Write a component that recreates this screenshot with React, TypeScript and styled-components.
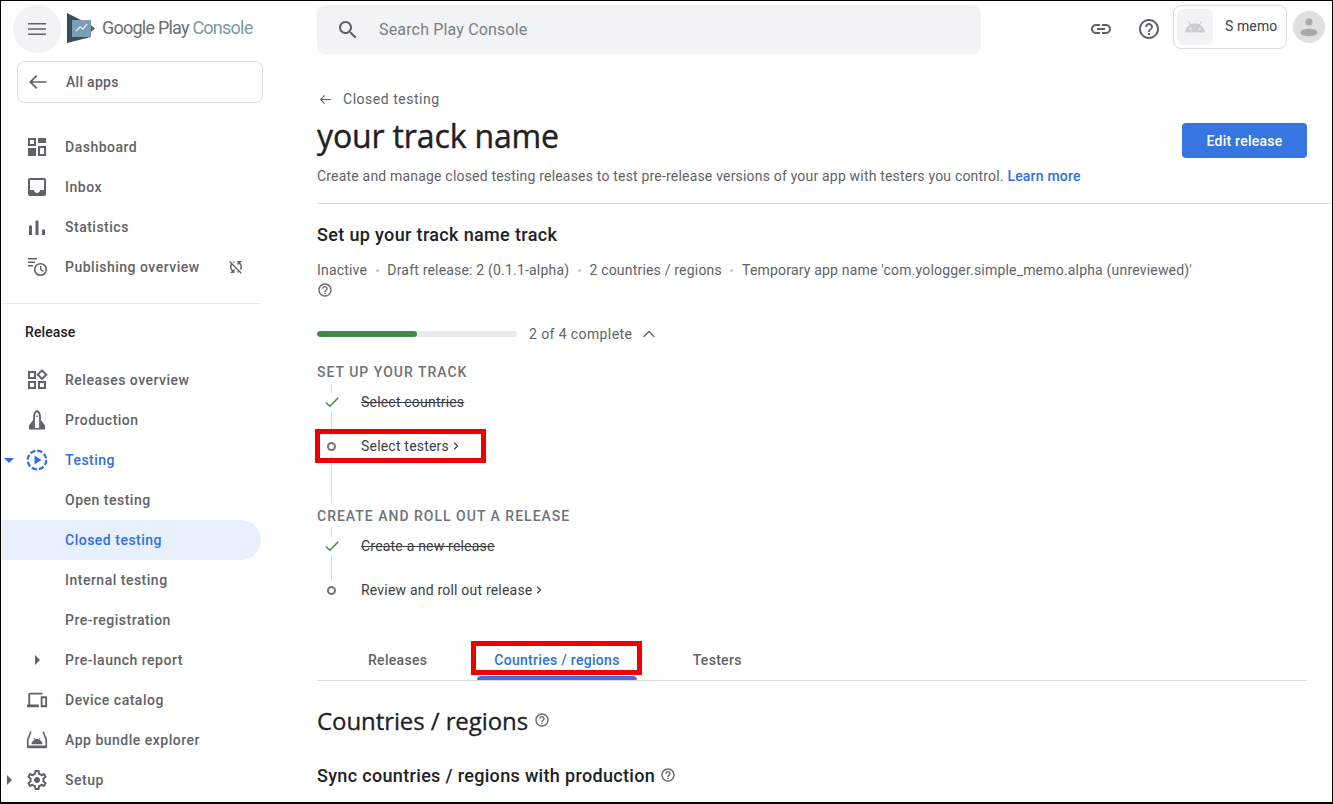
import React from 'react';
import styled, { createGlobalStyle } from 'styled-components';
import { ChevronRight, ChevronUp } from 'lucide-react';

const GlobalStyle = createGlobalStyle`
  html, body {
    margin: 0;
    padding: 0;
    background: #fff;
  }
  * {
    box-sizing: border-box;
  }
  body {
    font-family: Roboto, "Liberation Sans", sans-serif;
    color: #202124;
  }
`;

const Help = ({ size = 16, color = '#5f6368' }: { size?: number; color?: string }) => (
  <svg width={size} height={size} viewBox="0 0 24 24" fill={color}>
    <path d="M11 18h2v-2h-2v2zm1-16C6.480 2 2 6.480 2 12s4.480 10 10 10 10-4.480 10-10S17.520 2 12 2zm0 18c-4.410 0-8-3.590-8-8s3.590-8 8-8 8 3.590 8 8-3.590 8-8 8zm0-14c-2.210 0-4 1.790-4 4h2c0-1.100.9-2 2-2s2 .9 2 2c0 2-3 1.750-3 5h2c0-2.250 3-2.500 3-5 0-2.210-1.790-4-4-4z" />
  </svg>
);

const Md = ({ d, size = 24, color = '#5f6368' }: { d: string; size?: number; color?: string }) => (
  <svg width={size} height={size} viewBox="0 0 24 24" fill={color}>
    <path d={d} />
  </svg>
);

const paths = {
  menu: 'M3 18h18v-1.600H3V18zm0-5.200h18v-1.600H3v1.600zM3 6v1.600h18V6H3z',
  back: 'M20 11.200H6.800l4.600-4.600L10.300 5.500 3.800 12l6.500 6.500 1.100-1.100-4.600-4.600H20v-1.600z',
  search:
    'M15.500 14h-.79l-.28-.27C15.410 12.590 16 11.110 16 9.500 16 5.910 13.090 3 9.500 3S3 5.910 3 9.500 5.910 16 9.500 16c1.610 0 3.090-.59 4.230-1.570l.27.28v.79l5 4.990L20.490 19l-4.990-5zm-6 0C7.010 14 5 11.990 5 9.500S7.010 5 9.500 5 14 7.010 14 9.500 11.990 14 9.500 14z',
  link: 'M3.900 12c0-1.710 1.390-3.100 3.100-3.100h4V7H7c-2.760 0-5 2.240-5 5s2.240 5 5 5h4v-1.900H7c-1.710 0-3.100-1.390-3.100-3.100zM8 13h8v-2H8v2zm9-6h-4v1.900h4c1.710 0 3.100 1.390 3.100 3.100s-1.390 3.100-3.100 3.100h-4V17h4c2.760 0 5-2.240 5-5s-2.240-5-5-5z',
  check: 'M9 16.200L4.800 12l-1.400 1.400L9 19 21 7l-1.400-1.400z',
  syncOff:
    'M10 6.350V4.260c-.8.21-1.550.54-2.230.96l1.460 1.460c.25-.12.5-.24.770-.33zm-7.140-.94l2.360 2.360C4.450 8.990 4 10.440 4 12c0 2.210.91 4.200 2.360 5.640L4 20h6v-6l-2.240 2.240C6.680 15.150 6 13.660 6 12c0-1 .25-1.940.68-2.770l8.080 8.080c-.25.13-.5.25-.77.34v2.090c.8-.21 1.550-.54 2.230-.96l2.360 2.360 1.270-1.270L4.140 4.140 2.860 5.410zM20 4h-6v6l2.240-2.240C17.320 8.850 18 10.340 18 12c0 1-.25 1.940-.68 2.770l1.460 1.460C19.550 15.010 20 13.560 20 12c0-2.210-.91-4.200-2.360-5.640L20 4z',
  dashboard:
    'M3 3h8v8H3V3zm2 2v4h4V5H5zm8-2h8v5h-8V3zm0 8h8v10h-8V11zm2 2v6h4v-6h-4zM3 13h8v8H3v-8z',
  inbox:
    'M19 3H5c-1.100 0-2 .9-2 2v14c0 1.100.9 2 2 2h14c1.100 0 2-.9 2-2V5c0-1.100-.9-2-2-2zm0 12h-4c0 1.660-1.350 3-3 3s-3-1.340-3-3H5V5h14v10z',
  stats: 'M4 10.500h3V20H4v-9.500zm6.500-5h3V20h-3V5.500zm6.500 9h3V20h-3v-5.500z',
  releases:
    'M3 3h8v8H3V3zm2 2v4h4V5H5zM3 13h8v8H3v-8zm2 2v4h4v-4H5zm8-2h8v8h-8v-8zm2 2v4h4v-4h-4zm2-14l5.660 5.660L17 12.300l-5.660-5.640L17 1zm0 2.830L14.170 6.660 17 9.490l2.830-2.830L17 3.830z',
  device:
    'M4.500 6H18V4H4.500C3.400 4 2.500 4.900 2.500 6v11H1v3h13v-3H4.500V6zM22 8h-5c-.55 0-1 .45-1 1v10c0 .55.45 1 1 1h5c.55 0 1-.45 1-1V9c0-.55-.45-1-1-1zm-1 9.500h-3V10h3v7.500z',
  bundle:
    'M4.600 2.500L1 11.500V19.500C1 20.300 1.700 21 2.500 21h19c.8 0 1.500-.7 1.500-1.500v-8l-3.600-9-1.500.6L21.200 12v6H2.800v-6l3.300-8.900-1.500-.6zM6 16.500c.2-2.300 1.400-4 3.300-4.900L8.300 10l.6-.4 1.100 1.600c1.300-.4 2.700-.4 4 0l1.100-1.600.6.4-1 1.600c1.900.9 3.100 2.600 3.300 4.900H6z',
  settings:
    'M19.430 12.980c.04-.32.07-.64.07-.98s-.03-.66-.07-.98l2.110-1.650c.19-.15.24-.42.12-.64l-2-3.460c-.12-.22-.39-.3-.61-.22l-2.490 1c-.52-.4-1.080-.73-1.690-.98l-.38-2.650C14.460 2.180 14.250 2 14 2h-4c-.25 0-.46.18-.49.42l-.38 2.650c-.61.25-1.170.59-1.690.98l-2.490-1c-.23-.09-.49 0-.61.22l-2 3.460c-.13.22-.07.49.12.64l2.110 1.650c-.04.32-.07.65-.07.98s.03.66.07.98l-2.110 1.650c-.19.15-.24.42-.12.64l2 3.460c.12.22.39.3.61.22l2.490-1c.52.4 1.080.73 1.690.98l.38 2.650c.03.24.24.42.49.42h4c.25 0 .46-.18.49-.42l.38-2.650c.61-.25 1.170-.59 1.690-.98l2.490 1c.23.09.49 0 .61-.22l2-3.460c.12-.22.07-.49-.12-.64l-2.110-1.650zM17.450 11.270c.04.31.05.52.05.73 0 .21-.02.43-.05.73l-.14 1.130.89.7 1.080.84-.7 1.210-1.270-.51-1.040-.42-.9.68c-.43.32-.84.56-1.250.73l-1.060.43-.16 1.130-.2 1.350h-1.400l-.19-1.350-.16-1.130-1.060-.43c-.43-.18-.83-.41-1.230-.71l-.91-.7-1.060.43-1.270.51-.7-1.210 1.080-.84.89-.7-.14-1.130c-.03-.31-.05-.54-.05-.74s.02-.43.05-.73l.14-1.130-.89-.7-1.080-.84.7-1.210 1.270.51 1.040.42.9-.68c.43-.32.84-.56 1.250-.73l1.060-.43.16-1.130.2-1.350h1.390l.19 1.350.16 1.130 1.060.43c.43.18.83.41 1.230.71l.91.7 1.060-.43 1.270-.51.7 1.210-1.070.85-.89.7.14 1.130zM12 9c-1.660 0-3 1.340-3 3s1.340 3 3 3 3-1.340 3-3-1.340-3-3-3z',
  android:
    'M17.600 9.480l1.840-3.180c.16-.31.04-.69-.26-.85-.29-.15-.65-.06-.83.22l-1.880 3.240c-2.860-1.210-6.080-1.210-8.940 0L5.650 5.670c-.19-.29-.58-.38-.87-.2-.28.18-.37.54-.22.83L6.400 9.480C3.300 11.250 1.340 14.400 1 18h22c-.34-3.600-2.300-6.750-5.400-8.520zM7 15.250c-.69 0-1.250-.56-1.250-1.250s.56-1.250 1.250-1.250 1.250.56 1.250 1.250-.56 1.250-1.250 1.250zm10 0c-.69 0-1.250-.56-1.250-1.250s.56-1.250 1.250-1.250 1.250.56 1.250 1.250-.56 1.250-1.250 1.250z',
};

const Frame = styled.div`
  position: relative;
  width: 1333px;
  height: 804px;
  border: 1px solid #000;
  border-bottom-width: 2px;
  overflow: hidden;
  display: flex;
  background: #fff;
`;

const Sidebar = styled.aside`
  width: 292px;
  flex-shrink: 0;
  display: flex;
  flex-direction: column;
`;

const Brand = styled.div`
  display: flex;
  align-items: center;
  height: 48px;
  margin: 4px 0 8px 12px;
`;

const MenuCircle = styled.div`
  width: 48px;
  height: 48px;
  border-radius: 50%;
  background: #f1f3f4;
  display: flex;
  align-items: center;
  justify-content: center;
`;

const BrandText = styled.div`
  margin: -3px 0 0 7px;
  font-size: 18px;
  letter-spacing: -0.77px;
  color: #6b6e72;
  white-space: nowrap;
  span {
    color: #7e98a8;
  }
`;

const AllApps = styled.div`
  width: 246px;
  height: 42px;
  margin: 0 0 24px 16px;
  border: 1px solid #dadce0;
  border-radius: 8px;
  display: flex;
  align-items: center;
  padding-left: 7px;
  gap: 15px;
  font-size: 14px;
  font-weight: 500;
  letter-spacing: 0.3px;
  color: #5f6368;
`;

const NavGroup = styled.nav`
  display: flex;
  flex-direction: column;
  width: 260px;
`;

const NavRow = styled.div<{ $active?: boolean; $selected?: boolean }>`
  position: relative;
  height: 40px;
  display: flex;
  align-items: center;
  padding-left: 64px;
  font-size: 14px;
  font-weight: 500;
  letter-spacing: 0.5px;
  white-space: nowrap;
  color: ${p => (p.$active || p.$selected ? '#2f6fdf' : '#5f6368')};
  background: ${p => (p.$selected ? '#e8f0fe' : 'transparent')};
  border-radius: ${p => (p.$selected ? '0 20px 20px 0' : '0')};
`;

const NavIcon = styled.span`
  position: absolute;
  left: 24px;
  top: 8px;
  width: 24px;
  height: 24px;
  display: flex;
  align-items: center;
  justify-content: center;
`;

const Caret = styled.span<{ $left: number; $down?: boolean; $blue?: boolean }>`
  position: absolute;
  left: ${p => p.$left}px;
  top: 50%;
  width: 0;
  height: 0;
  ${p =>
    p.$down
      ? `margin-top: -2px;
         border-left: 5px solid transparent;
         border-right: 5px solid transparent;
         border-top: 5px solid ${p.$blue ? '#2f6fdf' : '#5f6368'};`
      : `margin-top: -5px;
         border-top: 5px solid transparent;
         border-bottom: 5px solid transparent;
         border-left: 5px solid #5f6368;`}
`;

const Trailing = styled.span`
  position: absolute;
  left: 226px;
  top: 11px;
  display: flex;
`;

const NavDivider = styled.hr`
  width: 260px;
  margin: 16px 0 0;
  border: 0;
  border-top: 1px solid #e8eaed;
`;

const SectionLabel = styled.div`
  margin: 20px 0 20px 24px;
  font-size: 14px;
  font-weight: 500;
  line-height: 16px;
  letter-spacing: 0.1px;
  color: #202124;
`;

const Column = styled.div`
  flex: 1;
  min-width: 0;
  display: flex;
  flex-direction: column;
`;

const TopBar = styled.header`
  height: 53px;
  padding: 4px 0 0 24px;
  display: flex;
  align-items: flex-start;
`;

const SearchBox = styled.div`
  width: 664px;
  height: 49px;
  border-radius: 8px;
  background: #f1f3f4;
  display: flex;
  align-items: center;
  padding-left: 19px;
  gap: 19px;
  font-size: 16px;
  letter-spacing: 0.16px;
  color: #7b7f83;
`;

const IconSlot = styled.div<{ $ml: number }>`
  margin: 12px 0 0 ${p => p.$ml}px;
  display: flex;
`;

const AppChip = styled.div`
  margin-left: 12px;
  width: 114px;
  height: 44px;
  border: 1px solid #dadce0;
  border-radius: 8px;
  display: flex;
  align-items: center;
  padding: 3px;
  gap: 12px;
  font-size: 14px;
  letter-spacing: 0.1px;
  color: #3c4043;
`;

const AppName = styled.span`
  margin-top: -3px;
`;

const AppIcon = styled.div`
  width: 36px;
  height: 36px;
  border-radius: 6px;
  background: #f1f3f4;
  display: flex;
  align-items: center;
  justify-content: center;
`;

const Avatar = styled.div`
  margin: 6px 0 0 6px;
  width: 32px;
  height: 32px;
  border-radius: 50%;
  background: #e0e0e0;
  display: flex;
`;

const Header = styled.section`
  margin: 0 0 0 24px;
  padding: 35px 24px 0 0;
  height: 150px;
  border-bottom: 1px solid #dadce0;
  display: flex;
  flex-direction: column;
`;

const Breadcrumb = styled.div`
  display: flex;
  align-items: center;
  gap: 9px;
  height: 20px;
  font-size: 14px;
  letter-spacing: 0.52px;
  color: #5f6368;
`;

const TitleRow = styled.div`
  display: flex;
  justify-content: space-between;
  align-items: flex-start;
`;

const Title = styled.h1`
  margin: 7px 0 10px;
  font-size: 32px;
  line-height: 40px;
  font-weight: 400;
  color: #202124;
  -webkit-text-stroke: 0.4px #202124;
  font-family: "Open Sans", Roboto, sans-serif;
  letter-spacing: -0.14px;
`;

const EditButton = styled.button`
  width: 125px;
  height: 35px;
  margin: 14px 1px 0 0;
  border: 0;
  border-radius: 4px;
  background: #3776e1;
  color: #fff;
  font-family: inherit;
  font-size: 14px;
  font-weight: 500;
  letter-spacing: 0.25px;
`;

const Description = styled.p`
  margin: 0;
  font-size: 14px;
  line-height: 20px;
  color: #5f6368;
  letter-spacing: 0.19px;
  a {
    color: #2f6fdf;
    font-weight: 500;
    letter-spacing: 0.2px;
  }
`;

const Body = styled.section`
  padding: 20px 25px 0 24px;
  flex: 1;
  min-height: 0;
`;

const TrackHeading = styled.h2`
  margin: 0;
  font-size: 18px;
  line-height: 22px;
  font-weight: 500;
  letter-spacing: 0.35px;
  color: #202124;
`;

const StatusLine = styled.div`
  margin-top: 14px;
  display: flex;
  flex-wrap: wrap;
  align-items: center;
  font-size: 14px;
  line-height: 20px;
  letter-spacing: 0.19px;
  color: #5f6368;
`;

const Dot = styled.span`
  width: 3px;
  height: 3px;
  margin: 0 8.6px;
  border-radius: 50%;
  background: #c4c7c9;
`;

const HelpLine = styled.div`
  margin-top: 2px;
  height: 16px;
  display: flex;
`;

const ProgressRow = styled.div`
  margin-top: 26px;
  display: flex;
  align-items: center;
  height: 20px;
  font-size: 14px;
  color: #5f6368;
  letter-spacing: 0.4px;
`;

const ProgressTrack = styled.div`
  width: 200px;
  height: 6px;
  border-radius: 3px;
  background: #e8eaed;
  margin-right: 12px;
  overflow: hidden;
`;

const ProgressFill = styled.div`
  height: 100%;
  background: #3f8a4a;
  border-radius: 3px;
`;

const StepGroup = styled.div<{ $top: number }>`
  margin-top: ${p => p.$top}px;
`;

const StepTitle = styled.div`
  height: 16px;
  line-height: 16px;
  font-size: 14px;
  font-weight: 500;
  letter-spacing: 1px;
  color: #6f7377;
`;

const StepList = styled.div<{ $railEnd: number }>`
  position: relative;
  margin-top: 12px;
  display: flex;
  flex-direction: column;
  gap: 24px;
  &::before {
    content: '';
    position: absolute;
    left: 14px;
    top: -8px;
    bottom: ${p => p.$railEnd}px;
    width: 1px;
    background: #dadce0;
  }
`;

const Step = styled.div<{ $done?: boolean }>`
  position: relative;
  height: 20px;
  display: flex;
  align-items: center;
  padding-left: 44px;
  font-size: 14px;
  letter-spacing: 0.2px;
  color: #3c4043;
  text-decoration: ${p => (p.$done ? 'line-through' : 'none')};
`;

const StepMark = styled.span`
  position: absolute;
  left: 5px;
  top: 1px;
  width: 19px;
  height: 18px;
  background: #fff;
  display: flex;
  align-items: center;
  justify-content: center;
`;

const Ring = styled.span`
  width: 9px;
  height: 9px;
  border-radius: 50%;
  border: 2px solid #70757a;
  background: #fff;
`;

const StepArrow = styled(ChevronRight)`
  margin-left: 1px;
  color: #3c4043;
`;

const Callout = styled.div<{ $left: number; $top: number }>`
  position: absolute;
  left: ${p => p.$left}px;
  top: ${p => p.$top}px;
  width: 171px;
  height: 34px;
  border: 5px solid #f00000;
  pointer-events: none;
`;

const Tabs = styled.div`
  display: flex;
  height: 38px;
  margin-top: 43px;
  padding-left: 34px;
  border-bottom: 1px solid #dadce0;
`;

const Tab = styled.div<{ $active?: boolean; $gap?: number }>`
  position: relative;
  margin-left: ${p => p.$gap ?? 0}px;
  padding: 0 17px;
  height: 37px;
  line-height: 34px;
  font-size: 14px;
  font-weight: 500;
  letter-spacing: 0.3px;
  color: ${p => (p.$active ? '#2f6fdf' : '#5f6368')};
  ${p =>
    p.$active &&
    `&::after {
      content: '';
      position: absolute;
      left: 0;
      right: 0;
      bottom: 0;
      height: 4px;
      background: #3776e1;
      border-radius: 4px 4px 0 0;
    }`}
`;

const SectionTitle = styled.h2`
  margin: 21px 0 0;
  display: flex;
  align-items: center;
  gap: 6px;
  height: 36px;
  font-size: 24px;
  font-weight: 400;
  color: #202124;
  -webkit-text-stroke: 0.3px #202124;
  font-family: "Open Sans", Roboto, sans-serif;
  letter-spacing: -0.08px;
`;

const SubTitle = styled.h3`
  margin: 25px 0 0;
  display: flex;
  align-items: center;
  gap: 5px;
  height: 24px;
  font-size: 18px;
  font-weight: 500;
  letter-spacing: 0.33px;
  color: #202124;
`;

const sideTop = [
  { label: 'Dashboard', icon: paths.dashboard },
  { label: 'Inbox', icon: paths.inbox },
  { label: 'Statistics', icon: paths.stats },
];

const BrandMark = () => (
  <svg width="28" height="30" viewBox="0 0 28 30" style={{ marginLeft: 6, marginTop: -2 }}>
    <path d="M0 0l14 7H5v17h19L0 30z" fill="#37505e" />
    <path d="M5 7h19v17H5z" fill="#7a9fb5" />
    <path d="M24 12l4 3.500-4 3.500z" fill="#5a6165" />
    <path d="M9 18l4-4 3 2 4-5" fill="none" stroke="#dbe7ee" strokeWidth="1.500" />
  </svg>
);

const Testing = () => (
  <svg width="24" height="24" viewBox="0 0 24 24">
    <circle cx="12" cy="12" r="9.300" fill="none" stroke="#2f6fdf" strokeWidth="2.200" strokeDasharray="5.300 2" />
    <path d="M9.500 7.500L16.500 12l-7 4.500z" fill="#2f6fdf" />
  </svg>
);

const PublishIcon = () => (
  <svg width="24" height="24" viewBox="0 0 24 24" fill="#5f6368">
    <path d="M3 3h9v1.500H3zM3 6.500h7V8H3zM3 10h5v1.500H3z" />
    <circle cx="15.500" cy="14.500" r="5.800" fill="none" stroke="#5f6368" strokeWidth="1.600" />
    <path d="M15 11h1.400v3.400l2.400 1.400-.7 1.100-3.100-1.800z" />
  </svg>
);

const ProductionIcon = () => (
  <svg width="24" height="24" viewBox="0 0 24 24" fill="#5f6368">
    <path d="M9 20V8.500C9 6 10 4 12 3c2 1 3 3 3 5.500V20" fill="none" stroke="#5f6368" strokeWidth="1.800" />
    <path d="M8.500 11.500L4 17.500V21h4.500zM15.500 11.500l4.500 6V21h-4.500z" />
    <path d="M4 20h16v1.400H4zM11.200 7.500h1.600v1.600h-1.600z" />
  </svg>
);

const AvatarIcon = () => (
  <svg width="32" height="32" viewBox="0 0 32 32" fill="#a9a9a9">
    <circle cx="16" cy="11" r="3.600" />
    <ellipse cx="16" cy="21.500" rx="8.500" ry="3.800" />
  </svg>
);

export default function App() {
  return (
    <>
      <GlobalStyle />
      <Frame>
        <Sidebar>
          <Brand>
            <MenuCircle>
              <Md d={paths.menu} />
            </MenuCircle>
            <BrandMark />
            <BrandText>
              Google Play <span>Console</span>
            </BrandText>
          </Brand>
          <AllApps>
            <Md d={paths.back} size={26} />
            All apps
          </AllApps>
          <NavGroup>
            {sideTop.map(item => (
              <NavRow key={item.label}>
                <NavIcon>
                  <Md d={item.icon} />
                </NavIcon>
                {item.label}
              </NavRow>
            ))}
            <NavRow>
              <NavIcon>
                <PublishIcon />
              </NavIcon>
              Publishing overview
              <Trailing>
                <Md d={paths.syncOff} size={18} />
              </Trailing>
            </NavRow>
          </NavGroup>
          <NavDivider />
          <SectionLabel>Release</SectionLabel>
          <NavGroup>
            <NavRow>
              <NavIcon>
                <Md d={paths.releases} />
              </NavIcon>
              Releases overview
            </NavRow>
            <NavRow>
              <NavIcon>
                <ProductionIcon />
              </NavIcon>
              Production
            </NavRow>
            <NavRow $active>
              <Caret $left={3} $down $blue />
              <NavIcon>
                <Testing />
              </NavIcon>
              Testing
            </NavRow>
            <NavRow>Open testing</NavRow>
            <NavRow $selected>Closed testing</NavRow>
            <NavRow>Internal testing</NavRow>
            <NavRow>Pre-registration</NavRow>
            <NavRow>
              <Caret $left={34} />
              Pre-launch report
            </NavRow>
            <NavRow>
              <NavIcon>
                <Md d={paths.device} size={22} />
              </NavIcon>
              Device catalog
            </NavRow>
            <NavRow>
              <NavIcon>
                <Md d={paths.bundle} size={22} />
              </NavIcon>
              App bundle explorer
            </NavRow>
            <NavRow>
              <Caret $left={6} />
              <NavIcon>
                <Md d={paths.settings} />
              </NavIcon>
              Setup
            </NavRow>
          </NavGroup>
        </Sidebar>
        <Column>
          <TopBar>
            <SearchBox>
              <Md d={paths.search} />
              Search Play Console
            </SearchBox>
            <IconSlot $ml={108}>
              <Md d={paths.link} />
            </IconSlot>
            <IconSlot $ml={24}>
              <Help size={24} />
            </IconSlot>
            <AppChip>
              <AppIcon>
                <Md d={paths.android} size={22} color="#cbcdd0" />
              </AppIcon>
              <AppName>S memo</AppName>
            </AppChip>
            <Avatar>
              <AvatarIcon />
            </Avatar>
          </TopBar>
          <Header>
            <Breadcrumb>
              <Md d={paths.back} size={17} />
              Closed testing
            </Breadcrumb>
            <TitleRow>
              <Title>your track name</Title>
              <EditButton>Edit release</EditButton>
            </TitleRow>
            <Description>
              Create and manage closed testing releases to test pre-release versions of your app with testers you control.{' '}
              <a>Learn more</a>
            </Description>
          </Header>
          <Body>
            <TrackHeading>Set up your track name track</TrackHeading>
            <StatusLine>
              Inactive
              <Dot />
              Draft release: 2 (0.1.1-alpha)
              <Dot />
              2 countries / regions
              <Dot />
              Temporary app name 'com.yologger.simple_memo.alpha (unreviewed)'
            </StatusLine>
            <HelpLine>
              <Help />
            </HelpLine>
            <ProgressRow>
              <ProgressTrack>
                <ProgressFill style={{ width: '50%' }} />
              </ProgressTrack>
              2 of 4 complete
              <ChevronUp size={20} strokeWidth={1.600} style={{ marginLeft: 7 }} />
            </ProgressRow>
            <StepGroup $top={20}>
              <StepTitle>SET UP YOUR TRACK</StepTitle>
              <StepList $railEnd={-47}>
                <Step $done>
                  <StepMark>
                    <Md d={paths.check} size={18} color="#3f8a4a" />
                  </StepMark>
                  Select countries
                </Step>
                <Step>
                  <StepMark>
                    <Ring />
                  </StepMark>
                  Select testers
                  <StepArrow size={12} strokeWidth={2.300} />
                </Step>
              </StepList>
            </StepGroup>
            <StepGroup $top={52}>
              <StepTitle>CREATE AND ROLL OUT A RELEASE</StepTitle>
              <StepList $railEnd={8}>
                <Step $done>
                  <StepMark>
                    <Md d={paths.check} size={18} color="#3f8a4a" />
                  </StepMark>
                  Create a new release
                </Step>
                <Step>
                  <StepMark>
                    <Ring />
                  </StepMark>
                  Review and roll out release
                  <StepArrow size={12} strokeWidth={2.300} />
                </Step>
              </StepList>
            </StepGroup>
            <Tabs>
              <Tab>Releases</Tab>
              <Tab $active $gap={33}>Countries / regions</Tab>
              <Tab $gap={39}>Testers</Tab>
            </Tabs>
            <SectionTitle>
              Countries / regions
              <Help />
            </SectionTitle>
            <SubTitle>
              Sync countries / regions with production
              <Help />
            </SubTitle>
          </Body>
        </Column>
        <Callout $left={314} $top={428} />
        <Callout $left={470} $top={640} />
      </Frame>
    </>
  );
}
